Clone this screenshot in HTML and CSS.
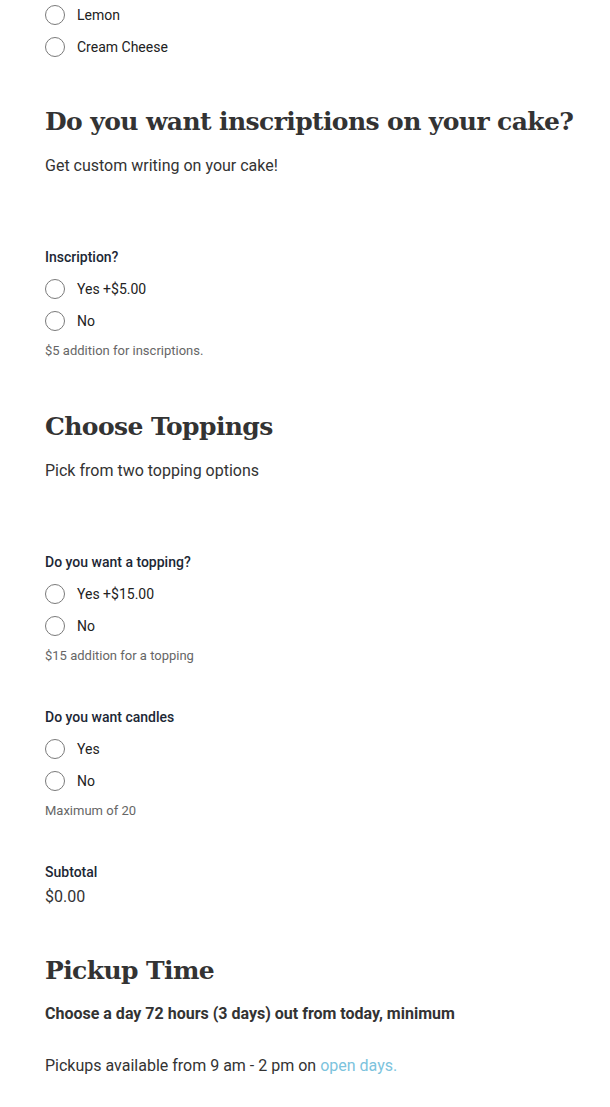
FILE: index.html
```html
<!DOCTYPE html>
<html>
<head>
<meta charset="utf-8">
<link rel="stylesheet" href="styles.css">
</head>
<body>
<div class="page">
  <div class="options first">
    <label class="opt"><span class="radio"></span>Lemon</label>
    <label class="opt"><span class="radio"></span>Cream Cheese</label>
  </div>

  <h2 class="heading h-first">Do you want inscriptions on your cake?</h2>
  <p class="desc">Get custom writing on your cake!</p>

  <div class="field">
    <div class="label">Inscription?</div>
    <div class="options">
      <label class="opt"><span class="radio"></span>Yes +$5.00</label>
      <label class="opt"><span class="radio"></span>No</label>
    </div>
    <div class="help">$5 addition for inscriptions.</div>
  </div>

  <h2 class="heading h-mid">Choose Toppings</h2>
  <p class="desc">Pick from two topping options</p>

  <div class="field">
    <div class="label">Do you want a topping?</div>
    <div class="options">
      <label class="opt"><span class="radio"></span>Yes +$15.00</label>
      <label class="opt"><span class="radio"></span>No</label>
    </div>
    <div class="help">$15 addition for a topping</div>
  </div>

  <div class="field field-next">
    <div class="label">Do you want candles</div>
    <div class="options">
      <label class="opt"><span class="radio"></span>Yes</label>
      <label class="opt"><span class="radio"></span>No</label>
    </div>
    <div class="help">Maximum of 20</div>
  </div>

  <div class="field field-next">
    <div class="label">Subtotal</div>
    <div class="total">$0.00</div>
  </div>

  <h2 class="heading h-last">Pickup Time</h2>
  <p class="strong">Choose a day 72 hours (3 days) out from today, minimum</p>
  <p class="desc pickups">Pickups available from 9 am - 2 pm on <a href="#">open days.</a></p>
</div>
</body>
</html>
```

FILE: styles.css
```css
html, body {
  margin: 0;
  padding: 0;
  background: #ffffff;
}
body {
  font-family: Roboto, "Liberation Sans", Arial, sans-serif;
  color: #333333;
}
.page {
  padding: 0 10px 0 45px;
}
.options {
  display: flex;
  flex-direction: column;
}
.options.first {
  margin-top: -1px;
}
.opt {
  display: flex;
  align-items: center;
  height: 32px;
  font-size: 14px;
  color: #222;
}
.radio {
  box-sizing: border-box;
  width: 20px;
  height: 20px;
  border: 1px solid #7a7a7a;
  border-radius: 50%;
  margin-right: 12px;
  background: #fff;
}
.heading {
  font-family: "DejaVu Serif", "Liberation Serif", serif;
  font-weight: bold;
  font-size: 25px;
  letter-spacing: -0.6px;
  line-height: 34px;
  color: #333333;
  white-space: nowrap;
  margin: 0;
}
.h-first { margin-top: 42px; }
.h-mid { margin-top: 50px; }
.h-last { margin-top: 45px; }
.desc {
  font-size: 16px;
  line-height: 24px;
  margin: 15px 0 0;
  color: #333;
}
.field {
  margin-top: 69px;
}
.field-next {
  margin-top: 42px;
}
.label {
  font-size: 14px;
  line-height: 20px;
  font-weight: 500;
  color: #1c2735;
  margin-bottom: 6px;
}
.help {
  font-size: 13px;
  line-height: 18px;
  color: #666;
  margin-top: 5px;
}
.total {
  font-size: 16px;
  line-height: 24px;
  color: #333;
  margin-top: -3px;
}
.strong {
  font-size: 16px;
  line-height: 22px;
  font-weight: bold;
  margin: 15px 0 0;
  color: #333;
}
.pickups {
  margin-top: 29px;
}
.pickups a {
  color: #7cc3dd;
  text-decoration: none;
}
```
